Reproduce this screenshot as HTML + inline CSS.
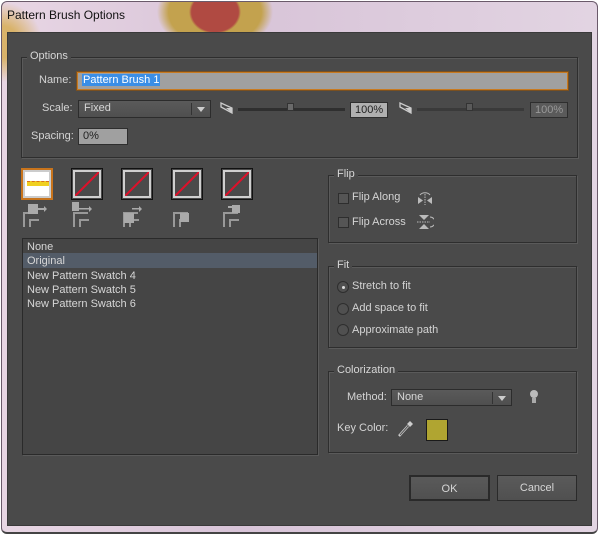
<!DOCTYPE html>
<html><head><style>
*{margin:0;padding:0;box-sizing:border-box}
body{width:600px;height:543px;background:#fff;position:relative;overflow:hidden;font-family:"Liberation Sans",sans-serif;font-size:11px;color:#d4d4d4}
.a{position:absolute}
#frame{left:1px;top:1px;width:597px;height:533px;border-radius:6px;border:1px solid #6a5a6a;border-bottom:2px solid #444;
background:radial-gradient(ellipse 26px 22px at 213px 10px,#b04a42 90%,transparent 100%),radial-gradient(ellipse 58px 40px at 213px 10px,#c3a24e 80%,transparent 100%),radial-gradient(ellipse 40px 40px at 0px 40px,#d9b36a 40%,transparent 100%),linear-gradient(90deg,#e8d6e4,#d8c4d8 40%,#e2d4e2);}
#title{left:7px;top:8px;color:#111;font-size:12px}
#body{left:7px;top:32px;width:585px;height:494px;background:#4a4a4a;border:1px solid #3a3a3a}
.grp{position:absolute;border:1px solid #2e2e2e;box-shadow:inset 1px 1px 0 #5a5a5a,1px 1px 0 #5a5a5a}
.lg{position:absolute;background:#4a4a4a;padding:0 3px;top:-8px;left:6px;color:#d6d6d6}
.in{position:absolute;background:#a0a0a0;border:1px solid #2e2e2e;color:#222;padding-left:4px;line-height:14px}
.dd{position:absolute;background:linear-gradient(#5a5a5a,#4f4f4f);border:1px solid #2c2c2c;color:#d6d6d6;padding-left:5px;line-height:15px}
.dd:after{content:"";position:absolute;right:5px;top:6px;border:4px solid transparent;border-top:5px solid #ccc;border-bottom:0}
.dd i{position:absolute;right:18px;top:2px;width:1px;height:12px;background:#333}
.tr{position:absolute;height:3px;background:#2f2f2f}
.th{position:absolute;width:7px;height:8px;background:#6a6a6a;border:1px solid #333}
.tile{position:absolute;width:32px;height:32px;border:1px solid #111;background:#4a4a4a}
.tile b{position:absolute;left:1px;top:1px;width:28px;height:28px;border:2px solid #cfcfcf;overflow:hidden}
.cb{position:absolute;width:11px;height:11px;border:1px solid #2e2e2e;background:#555}
.rd{position:absolute;width:12px;height:12px;border-radius:50%;border:1px solid #2e2e2e;background:#505050}
.btn{position:absolute;height:26px;background:linear-gradient(#5a5a5a,#505050);border:1px solid #2a2a2a;text-align:center;line-height:24px;color:#d6d6d6}
</style></head><body>
<div id="frame" class="a"></div>
<div id="title" class="a">Pattern Brush Options</div>
<div id="body" class="a"></div>

<div class="grp" style="left:21px;top:57px;width:557px;height:101px"><span class="lg" style="left:5px">Options</span></div>
<div class="a" style="left:39px;top:74px">Name:</div>
<div class="in" style="left:77px;top:72px;width:491px;height:18px;border-color:#c87a20;box-shadow:0 0 0 1px #7a5020"><span style="background:#3a8ee6;color:#fff;padding:0 1px">Pattern Brush 1</span></div>
<div class="a" style="left:42px;top:102px">Scale:</div>
<div class="dd" style="left:78px;top:100px;width:133px;height:18px">Fixed<i></i></div>
<svg class="a" style="left:220px;top:102px" width="14" height="12"><path d="M1 1v4l11 6V6z" fill="none" stroke="#ccc" stroke-width="1.3"/><path d="M6 6l6 5V6z" fill="#ccc"/></svg>
<div class="tr" style="left:238px;top:108px;width:107px"></div>
<div class="th" style="left:287px;top:103px"></div>
<div class="in" style="left:350px;top:102px;width:38px;height:16px;background:#b0b0b0">100%</div>
<svg class="a" style="left:399px;top:102px" width="14" height="12"><path d="M1 1v4l11 6V6z" fill="none" stroke="#ccc" stroke-width="1.3"/><path d="M6 6l6 5V6z" fill="#ccc"/></svg>
<div class="tr" style="left:417px;top:108px;width:107px;background:#3a3a3a"></div>
<div class="th" style="left:466px;top:103px;background:#5a5a5a"></div>
<div class="in" style="left:530px;top:102px;width:38px;height:16px;background:#5a5a5a;color:#999">100%</div>
<div class="a" style="left:31px;top:130px">Spacing:</div>
<div class="in" style="left:78px;top:128px;width:50px;height:17px">0%</div>

<div class="tile" style="left:21px;top:168px;border:2px solid #c8741c;background:#222"><b style="left:0;top:0;width:28px;height:28px;background:#fff;border:2px solid #ccc"><span class="a" style="left:2px;top:9px;width:22px;height:5px;background:#f0d020;border-top:1px dashed #d87020"></span></b></div>
<div class="tile" style="left:71px;top:168px"><b><svg width="24" height="24"><line x1="0" y1="24" x2="24" y2="0" stroke="#e0102a" stroke-width="2"/></svg></b></div>
<div class="tile" style="left:121px;top:168px"><b><svg width="24" height="24"><line x1="0" y1="24" x2="24" y2="0" stroke="#e0102a" stroke-width="2"/></svg></b></div>
<div class="tile" style="left:171px;top:168px"><b><svg width="24" height="24"><line x1="0" y1="24" x2="24" y2="0" stroke="#e0102a" stroke-width="2"/></svg></b></div>
<div class="tile" style="left:221px;top:168px"><b><svg width="24" height="24"><line x1="0" y1="24" x2="24" y2="0" stroke="#e0102a" stroke-width="2"/></svg></b></div>

<svg class="a" style="left:20px;top:201px" width="250" height="28">
<g fill="none" stroke="#999" stroke-width="2">
<path d="M4 26V12h14M10 26V19h9"/><path d="M54 26V12h14M60 26V19h9"/><path d="M104 26V12h14M110 26V19h9"/><path d="M154 26V12h14M160 26V19h9"/><path d="M204 26V12h14M210 26V19h9"/>
</g>
<g fill="#aaa"><rect x="8" y="3" width="10" height="10"/><path d="M18 7h6v2h-6z"/><path d="M24 5l3 3-3 3z"/>
<rect x="52" y="1" width="7" height="9"/><path d="M59 7h10v1.5h-10z"/><path d="M69 5l3 3-3 3z"/>
<rect x="104" y="12" width="10" height="10"/><path d="M112 7h7v1.5h-7z"/><path d="M119 5l3 3-3 3z"/>
<rect x="160" y="12" width="9" height="9"/>
<rect x="212" y="4" width="8" height="8"/><path d="M208 5h4v2h-4z"/></g>
</svg>

<div class="a" style="left:22px;top:238px;width:296px;height:217px;background:#454545;border:1px solid #2a2a2a;box-shadow:1px 1px 0 #5a5a5a"></div>
<div class="a" style="left:23px;top:253px;width:294px;height:15px;background:#535c68"></div>
<div class="a" style="left:27px;top:240px;line-height:14.3px;color:#d6d6d6">None<br>Original<br>New Pattern Swatch 4<br>New Pattern Swatch 5<br>New Pattern Swatch 6</div>

<div class="grp" style="left:328px;top:175px;width:249px;height:68px"><span class="lg" style="left:5px">Flip</span></div>
<div class="cb" style="left:338px;top:193px"></div><div class="a" style="left:352px;top:191px">Flip Along</div>
<div class="cb" style="left:338px;top:217px"></div><div class="a" style="left:352px;top:216px">Flip Across</div>
<svg class="a" style="left:416px;top:189px" width="18" height="16"><path d="M4 6a6 5 0 0 1 10 0" fill="none" stroke="#bbb"/><path d="M2 8v7l5-3.5zM16 8v7l-5-3.5z" fill="#bbb"/><path d="M9 5v11" stroke="#bbb" stroke-dasharray="1.5 1"/></svg>
<svg class="a" style="left:416px;top:214px" width="18" height="16"><path d="M3 1h10l-5 5zM3 15h10l-5-5z" fill="#bbb"/><path d="M1 8h13" stroke="#bbb" stroke-dasharray="1.5 1"/><path d="M14 3a5 5 0 0 1 0 10" fill="none" stroke="#bbb"/></svg>

<div class="grp" style="left:328px;top:266px;width:249px;height:82px"><span class="lg" style="left:5px">Fit</span></div>
<div class="rd" style="left:337px;top:281px"><span class="a" style="left:4px;top:4px;width:3px;height:3px;background:#ddd;border-radius:50%"></span></div><div class="a" style="left:352px;top:280px">Stretch to fit</div>
<div class="rd" style="left:337px;top:303px"></div><div class="a" style="left:352px;top:302px">Add space to fit</div>
<div class="rd" style="left:337px;top:324px"></div><div class="a" style="left:352px;top:324px">Approximate path</div>

<div class="grp" style="left:328px;top:371px;width:249px;height:82px"><span class="lg" style="left:5px">Colorization</span></div>
<div class="a" style="left:347px;top:391px">Method:</div>
<div class="dd" style="left:391px;top:389px;width:121px;height:17px">None<i></i></div>
<svg class="a" style="left:529px;top:389px" width="10" height="16"><circle cx="5" cy="5" r="4" fill="#bbb"/><rect x="3" y="9" width="4" height="5" fill="#aaa"/></svg>
<div class="a" style="left:337px;top:422px">Key Color:</div>
<svg class="a" style="left:397px;top:420px" width="16" height="18"><path d="M2 16l9-10" stroke="#ccc" stroke-width="2.5"/><path d="M3 15l8-9" stroke="#555" stroke-width="1"/><path d="M10 4l3-3 3 3-3 3z" fill="#ccc"/></svg>
<div class="a" style="left:426px;top:419px;width:22px;height:22px;background:#b0a531;border:1px solid #1a1a1a"></div>

<div class="btn" style="left:409px;top:475px;width:81px;border:2px solid #2a2a2a">OK</div>
<div class="btn" style="left:497px;top:475px;width:80px">Cancel</div>
</body></html>
